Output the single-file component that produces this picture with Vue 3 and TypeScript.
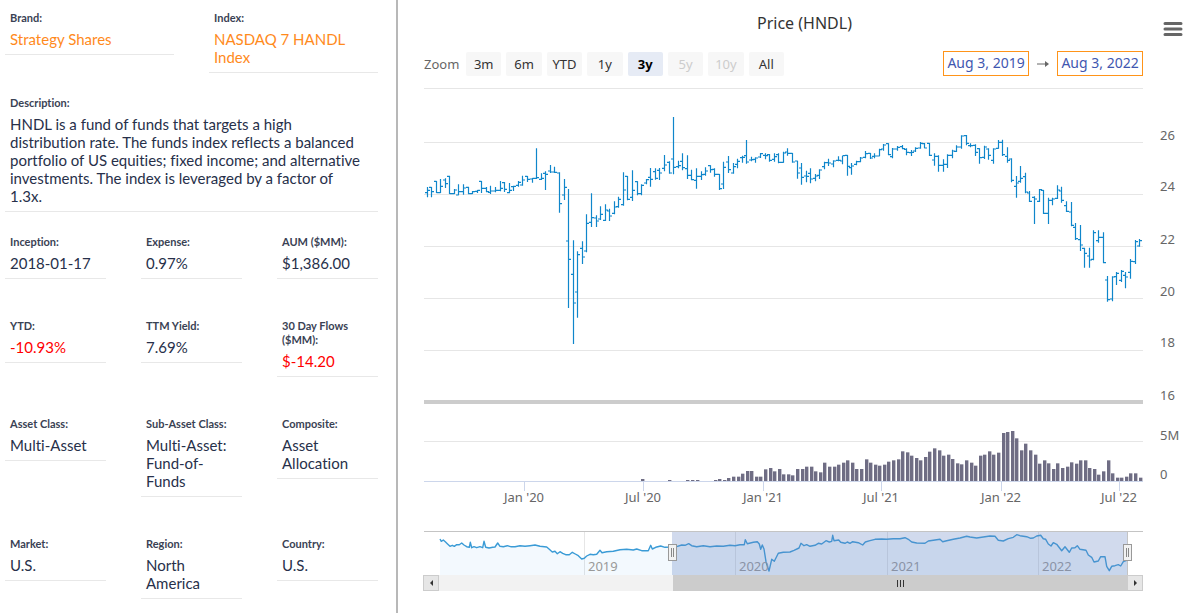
<script setup lang="ts">
import { ref } from 'vue'

interface Fact {
  label: string
  value: string
  negative?: boolean
}

const links: Fact[] = [
  { label: 'Brand:', value: 'Strategy Shares' },
  { label: 'Index:', value: 'NASDAQ 7 HANDL Index' },
]

const description = [
  'HNDL is a fund of funds that targets a high',
  'distribution rate. The funds index reflects a balanced',
  'portfolio of US equities; fixed income; and alternative',
  'investments. The index is leveraged by a factor of',
  '1.3x.',
].join('\n')

const facts: Fact[] = [
  { label: 'Inception:', value: '2018-01-17' },
  { label: 'Expense:', value: '0.97%' },
  { label: 'AUM ($MM):', value: '$1,386.00' },
  { label: 'YTD:', value: '-10.93%', negative: true },
  { label: 'TTM Yield:', value: '7.69%' },
  { label: '30 Day Flows ($MM):', value: '$-14.20', negative: true },
  { label: 'Asset Class:', value: 'Multi-Asset' },
  { label: 'Sub-Asset Class:', value: 'Multi-Asset: Fund-of-Funds' },
  { label: 'Composite:', value: 'Asset Allocation' },
  { label: 'Market:', value: 'U.S.' },
  { label: 'Region:', value: 'North America' },
  { label: 'Country:', value: 'U.S.' },
]

const ranges = ['3m', '6m', 'YTD', '1y', '3y', '5y', '10y', 'All']
const unavailable = ['5y', '10y']
const range = ref('3y')
const from = ref('Aug 3, 2019')
const to = ref('Aug 3, 2022')

// Weekly bars as open, high, low, close; levels are thirds of a unit below y = 110.
const weeks: number[][] = [
  [248,231,262,241],[232,231,262,245],[214,213,249,248],[248,207,249,229],[210,205,234,221],[199,197,252,251],
  [251,237,252,240],[255,223,256,245],[245,223,254,234],[232,230,253,251],[251,243,252,245],[244,240,249,241],
  [214,213,249,235],[235,231,247,245],[247,227,252,243],[243,231,247,241],[241,213,244,235],[218,216,246,238],
  [248,219,250,241],[230,227,243,229],[226,213,230,217],[225,197,227,210],[199,198,216,208],[207,204,218,205],
  [205,115,207,203],[208,190,210,205],[190,184,240,193],[183,165,189,186],[186,170,189,187],[189,187,308,281],
  [255,207,270,232],[393,237,594,448],[493,391,702,579],[546,424,623,434],[415,394,462,441],[423,313,427,340],
  [337,250,351,323],[324,316,351,333],[327,289,330,313],[331,283,333,300],[303,296,333,318],[310,274,313,291],
  [290,260,293,268],[284,187,287,240],[199,198,271,268],[262,181,273,241],[215,214,256,251],[251,223,256,226],
  [219,207,223,209],[202,174,230,208],[185,175,209,205],[181,174,210,189],[175,135,184,165],[157,154,191,189],
  [147,21,193,172],[170,152,175,167],[154,130,181,173],[176,136,207,196],[196,179,211,209],[211,175,236,199],
  [199,184,210,194],[193,172,197,183],[167,166,188,179],[178,175,200,193],[193,192,240,236],[222,155,237,172],
  [156,138,189,179],[189,159,191,170],[163,146,175,154],[143,137,158,142],[137,90,161,156],[150,140,154,149],
  [148,142,158,144],[141,129,144,131],[136,130,148,137],[134,132,155,151],[148,130,155,140],[134,130,160,157],
  [157,125,158,129],[126,115,137,130],[130,129,158,156],[153,152,206,189],[174,159,224,202],[198,182,217,199],
  [190,175,220,207],[205,192,214,198],[196,178,207,180],[170,155,178,158],[158,146,168,159],[162,151,172,153],
  [151,139,154,151],[153,138,163,137],[136,135,197,169],[173,159,194,168],[163,152,166,155],[155,141,157,144],
  [142,123,145,131],[130,129,147,144],[139,130,145,138],[138,116,139,119],[117,102,122,105],[101,100,136,134],
  [140,114,145,117],[117,108,122,112],[110,105,118,116],[118,115,136,127],[128,120,138,127],[123,112,126,115],
  [114,96,116,100],[101,99,115,114],[100,99,138,136],[150,130,167,139],[139,136,185,166],[166,148,185,163],
  [163,133,174,136],[136,119,145,123],[124,106,126,111],[111,76,116,78],[77,75,106,100],[107,100,112,107],
  [106,103,138,127],[116,115,161,143],[142,107,147,111],[117,115,149,136],[151,115,161,117],[115,90,116,97],
  [97,89,138,134],[139,112,158,151],[147,145,217,211],[229,198,263,219],[214,168,218,205],[200,188,250,246],
  [249,243,276,274],[262,259,342,267],[274,237,276,239],[241,240,312,310],[310,263,342,271],[271,263,286,267],
  [265,226,267,240],[243,230,278,271],[287,274,306,304],[306,276,349,346],[352,339,390,386],[389,345,423,405],
  [415,413,473,430],[438,413,473,450],[448,361,451,368],[392,361,398,382],[382,367,460,458],[510,498,575,569],
  [567,499,574,501],[500,486,525,490],[511,480,516,484],[496,486,535,501],[487,447,506,454],[455,390,462,395],
  [408,387,410,392],
]

const weekX = (i: number): number => 427 + i * 4.568
const level = (v: number): string => (110 + v / 3).toFixed(1)

const pricePath = weeks
  .map(([o, h, l, c], i) => {
    const x = Math.floor(weekX(i)) + 0.5
    return `M${x - 2.5} ${level(o)}H${x}M${x} ${level(h)}V${level(l)}M${x} ${level(c)}H${x + 2.5}`
  })
  .join('')

// Volume bar heights in thirds of a unit, starting at week 47.
const firstVolumeWeek = 47
const volumes: number[] = [
  6,0,0,0,0,0,3,0,0,0,3,3,3,0,0,0,3,6,3,9,13,13,22,30,30,13,13,35,39,29,36,20,20,17,36,36,43,43,29,26,55,43,43,
  49,55,62,55,36,36,65,55,49,46,49,58,62,65,89,86,76,69,62,72,88,98,92,76,79,66,53,50,62,55,46,76,79,89,79,85,
  144,147,150,128,92,112,92,79,52,62,53,36,53,39,43,56,52,62,62,39,36,19,29,62,23,10,10,13,23,23,10,
]
const bars = volumes
  .map((v, i) => ({ x: Math.round(weekX(i + firstVolumeWeek)) - 1, h: v / 3 }))
  .filter((b) => b.h > 0)

const priceAxis = [
  { text: '26', y: 140, line: 142 },
  { text: '24', y: 191, line: 194 },
  { text: '22', y: 244, line: 246 },
  { text: '20', y: 296, line: 298 },
  { text: '18', y: 347, line: 350 },
]
const timeAxis = [
  { text: "Jan '20", x: 524 },
  { text: "Jul '20", x: 643 },
  { text: "Jan '21", x: 763 },
  { text: "Jul '21", x: 881 },
  { text: "Jan '22", x: 1001 },
  { text: "Jul '22", x: 1119 },
]
const years = [
  { text: '2019', x: 584 },
  { text: '2020', x: 735 },
  { text: '2021', x: 887 },
  { text: '2022', x: 1038 },
]

// Navigator line as x, y pairs in thirds of a unit from (420, 520).
const history: number[] = [
  60,57,64,64,70,60,76,65,82,71,90,79,97,76,103,79,110,74,118,74,125,69,132,75,140,80,148,82,151,67,155,83,162,80,
  170,83,180,80,188,83,192,64,197,82,207,84,218,82,225,81,233,69,240,79,250,80,262,77,272,80,285,80,300,77,315,79,
  330,77,345,75,360,79,380,81,388,88,397,96,405,94,412,101,420,95,428,100,437,104,448,104,457,97,466,102,475,107,
  485,117,493,115,500,108,510,103,520,104,530,103,540,91,546,98,560,95,580,94,600,89,620,88,640,90,650,87,665,92,
  685,92,692,76,697,87,707,82,722,78,735,82,757,81,770,80,785,75,795,76,806,71,815,77,830,80,850,77,870,80,890,78,
  910,79,930,76,945,77,960,74,973,74,976,59,982,71,1000,67,1012,65,1018,72,1022,88,1027,75,1032,87,1038,125,
  1047,153,1055,118,1063,124,1075,100,1090,97,1110,96,1122,91,1137,84,1143,70,1152,77,1160,74,1170,79,1185,76,
  1195,70,1205,72,1218,62,1228,66,1235,64,1238,46,1242,62,1256,60,1262,67,1275,70,1282,66,1290,70,1298,65,1315,68,
  1328,75,1336,66,1350,62,1365,58,1385,57,1400,58,1420,56,1440,56,1455,53,1465,58,1475,66,1490,69,1515,70,1525,63,
  1540,61,1560,58,1568,65,1580,62,1600,58,1620,54,1640,49,1650,51,1670,54,1690,51,1710,48,1725,49,1735,61,1750,63,
  1765,56,1780,52,1790,44,1800,47,1820,50,1832,55,1840,54,1850,48,1862,46,1870,56,1877,58,1885,72,1893,78,1900,68,
  1910,73,1925,92,1935,80,1948,97,1955,84,1965,83,1972,77,1980,88,1998,91,2005,105,2015,112,2022,126,2035,123,
  2042,110,2055,110,2060,139,2068,152,2075,139,2085,137,2095,134,2102,138,2110,125,2122,120,
]
const points: string[] = []
for (let i = 0; i < history.length; i += 2) {
  points.push(`${(420 + history[i] / 3).toFixed(1)} ${(520 + history[i + 1] / 3).toFixed(1)}`)
}
const historyLine = 'M' + points.join('L')
const historyArea = `${historyLine}V575H440Z`
</script>

<template>
  <div class="page">
    <aside class="details">
      <dl class="grid two">
        <div v-for="l in links" :key="l.label" class="fact">
          <dt>{{ l.label }}</dt>
          <dd><a href="#">{{ l.value }}</a></dd>
        </div>
      </dl>
      <dl class="grid">
        <div class="fact">
          <dt>Description:</dt>
          <dd class="description">{{ description }}</dd>
        </div>
      </dl>
      <dl class="grid three">
        <div v-for="f in facts" :key="f.label" class="fact">
          <dt>{{ f.label }}</dt>
          <dd :class="{ negative: f.negative }">{{ f.value }}</dd>
        </div>
      </dl>
    </aside>

    <main class="chart">
      <header class="head">
        <h1>Price (HNDL)</h1>
        <button class="menu" type="button" aria-label="Chart menu">
          <svg width="20" height="16" viewBox="0 0 20 16">
            <path d="M2 2.5H18M2 8H18M2 13.5H18" stroke="#666" stroke-width="3" stroke-linecap="round" />
          </svg>
        </button>
      </header>

      <div class="toolbar">
        <span class="zoom">Zoom</span>
        <div class="ranges">
          <button
            v-for="r in ranges"
            :key="r"
            type="button"
            :class="{ active: r === range }"
            :disabled="unavailable.includes(r)"
            @click="range = r"
          >{{ r }}</button>
        </div>
        <div class="dates">
          <input v-model="from" type="text" aria-label="From" />
          <svg width="12" height="8" viewBox="0 0 12 8">
            <path d="M0 4H10" stroke="#666" />
            <path d="M8 1L12 4L8 7Z" fill="#666" />
          </svg>
          <input v-model="to" type="text" aria-label="To" />
        </div>
      </div>

      <svg class="plot" viewBox="398 76 802 499" role="img" aria-label="Price and volume history">
        <g fill="#e6e6e6">
          <rect x="424" y="88" width="719" height="1" />
          <rect v-for="p in priceAxis" :key="p.text" x="424" :y="p.line" width="719" height="1" />
          <rect x="424" y="441" width="719" height="1" />
        </g>
        <rect x="424" y="400" width="719" height="4" fill="#ccc" />
        <g class="axis">
          <text v-for="p in priceAxis" :key="p.text" x="1160" :y="p.y">{{ p.text }}</text>
          <text x="1160" y="400">16</text>
          <text x="1160" y="440">5M</text>
          <text x="1160" y="479">0</text>
        </g>

        <path :d="pricePath" fill="none" stroke="#0f86cb" stroke-width="1.2" />

        <rect v-for="b in bars" :key="b.x" :x="b.x" :y="481 - b.h" width="3.4" :height="b.h" fill="#6f6d84" />
        <g fill="#ccd6eb">
          <rect x="424" y="481" width="719" height="1" />
          <rect v-for="t in timeAxis" :key="t.text" :x="t.x" y="481" width="1" height="10" />
        </g>
        <g class="axis" text-anchor="middle">
          <text v-for="t in timeAxis" :key="t.text" :x="t.x" y="502">{{ t.text }}</text>
        </g>

        <g fill="#e6e6e6">
          <rect v-for="y in years" :key="y.text" :x="y.x" y="532" width="1" height="43" />
        </g>
        <path :d="historyArea" fill="#3399e6" fill-opacity="0.06" />
        <path :d="historyLine" fill="none" stroke="#3a9bd6" stroke-width="1.4" stroke-linejoin="round" />
        <g class="year">
          <text v-for="y in years" :key="y.text" :x="y.x + 4" y="571">{{ y.text }}</text>
        </g>
        <rect x="672" y="532" width="455" height="43" fill="#6685c2" fill-opacity="0.3" />
        <path d="M424 531.5H1143M1127.5 532V575" stroke="#c4c4c4" fill="none" />
        <g v-for="x in [668, 1123]" :key="x">
          <rect :x="x + 0.5" y="544.5" width="8" height="16" fill="#f2f2f2" stroke="#999" />
          <path :d="`M${x + 3.5} 548V557M${x + 5.5} 548V557`" stroke="#888" />
        </g>
      </svg>

      <div class="scrollbar">
        <button type="button" aria-label="Scroll left">
          <svg width="5" height="6" viewBox="0 0 5 6"><path d="M4 0V6L1 3Z" fill="#333" /></svg>
        </button>
        <div class="track">
          <div class="thumb"><i></i><i></i><i></i></div>
        </div>
        <button type="button" aria-label="Scroll right">
          <svg width="5" height="6" viewBox="0 0 5 6"><path d="M1 0V6L4 3Z" fill="#333" /></svg>
        </button>
      </div>
    </main>
  </div>
</template>

<style>
body {
  margin: 0;
  background: #fff;
}
</style>

<style scoped>
.page {
  display: flex;
  min-height: 100vh;
  font-family: 'Noto Sans', sans-serif;
}
.details {
  flex: none;
  width: 33%;
  box-sizing: content-box;
  border-right: 2px solid #b8b8b8;
  font-family: Lato, sans-serif;
  font-variant-ligatures: none;
  color: #27304a;
  display: flex;
  flex-direction: column;
  gap: 23px;
  padding-top: 11px;
}
.grid {
  display: grid;
  align-items: start;
  margin: 0 18px 0 5px;
  column-gap: 35px;
  row-gap: 40px;
}
.two {
  grid-template-columns: repeat(2, minmax(0, 1fr));
}
.three {
  grid-template-columns: repeat(3, minmax(0, 1fr));
}
.fact {
  padding: 0 5px 6px;
  border-bottom: 1px solid #e8e8e8;
}
dt {
  font-size: 11px;
  line-height: 14px;
  font-weight: 700;
  color: #3a4254;
  margin-bottom: 5px;
}
dd {
  margin: 0;
  font-size: 15px;
  line-height: 18px;
}
.description {
  white-space: pre-line;
}
a {
  color: #ff8a1c;
  text-decoration: none;
}
.negative {
  color: #f00;
}
.chart {
  flex: 1;
  min-width: 0;
}
.head {
  display: grid;
  grid-template-columns: 1fr auto 1fr;
  height: 51px;
  margin-left: 11px;
}
h1 {
  grid-column: 2;
  margin: 13px 0 0;
  font-size: 16px;
  line-height: 20px;
  font-weight: 400;
  color: #333;
}
button {
  border: 0;
  padding: 0;
  font: inherit;
  cursor: pointer;
}
.menu {
  justify-self: end;
  align-self: start;
  display: flex;
  background: none;
  margin: 21px 17px 0 0;
}
.toolbar {
  display: flex;
  align-items: center;
  height: 25px;
  margin: 0 7.1% 0 26px;
  font-size: 13px;
}
.zoom {
  width: 42px;
  color: #666;
}
.ranges {
  display: grid;
  grid-template-columns: repeat(8, 1fr);
  gap: 5px;
  width: 318px;
}
.ranges button {
  height: 24px;
  border-radius: 2px;
  background: #f7f7f7;
  color: #333;
}
.ranges button.active {
  background: #e6ebf5;
  color: #000;
  font-weight: 700;
}
.ranges button:disabled {
  color: #ccc;
}
.dates {
  display: flex;
  align-items: center;
  gap: 8px;
  margin-left: auto;
}
.dates input {
  box-sizing: border-box;
  width: 86px;
  height: 25px;
  padding: 0 0 2px;
  border: 1px solid #ff9419;
  background: #fff;
  font-family: inherit;
  font-size: 14px;
  text-align: center;
  color: #3f57b0;
}
.plot {
  display: block;
  width: 100%;
}
.axis {
  font-size: 13px;
  fill: #666;
}
.year {
  font-size: 13px;
  fill: #999;
}
.scrollbar {
  display: flex;
  height: 16px;
  margin: 0 7.1% 0 25px;
}
.scrollbar button {
  box-sizing: border-box;
  width: 16px;
  border: 1px solid #ccc;
  background: #e6e6e6;
  display: flex;
  align-items: center;
  justify-content: center;
}
.track {
  flex: 1;
  display: flex;
  justify-content: flex-end;
  background: #f2f2f2;
}
.thumb {
  width: 66%;
  background: #ccc;
  display: flex;
  align-items: center;
  justify-content: center;
  gap: 2px;
}
.thumb i {
  width: 1px;
  height: 7px;
  background: #333;
}
</style>
